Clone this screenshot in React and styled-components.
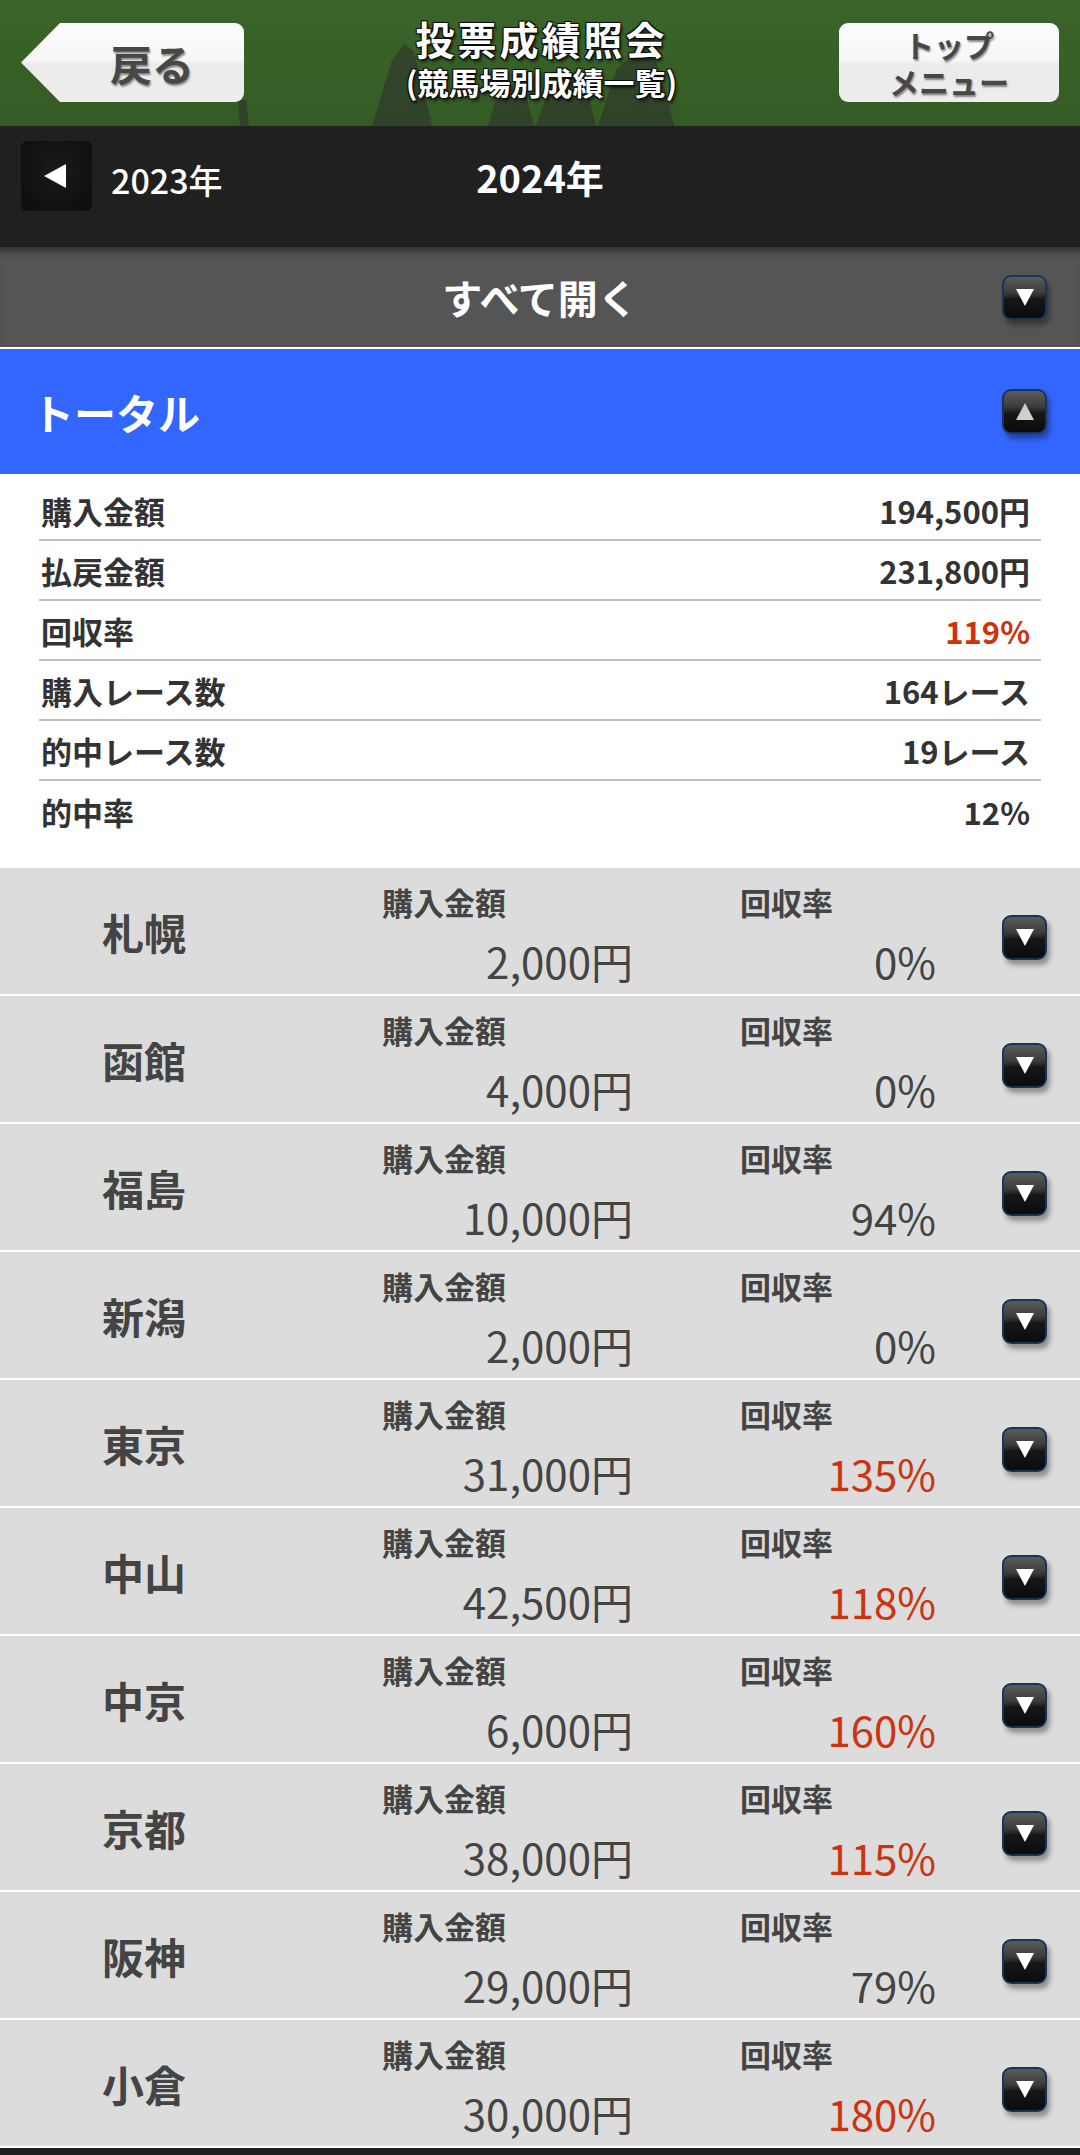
import styled, { createGlobalStyle } from 'styled-components';

const GlobalStyle = createGlobalStyle`
  html, body {
    margin: 0;
    padding: 0;
    background: #1e1e1e;
  }
  body {
    font-family: "Noto Sans CJK JP", "Noto Sans", sans-serif;
  }
`

const Page = styled.div`
  width: 1080px;
  background: #1e1e1e;
`

const Header = styled.header`
  position: relative;
  height: 126px;
  box-sizing: border-box;
  padding: 23px 21px 0;
  display: flex;
  justify-content: space-between;
  align-items: flex-start;
  background: linear-gradient(#3b652a, #345b24);
  overflow: hidden;
`

const Silhouette = styled.svg`
  position: absolute;
  left: 0;
  bottom: 0;
  width: 1080px;
  height: 126px;
`

const BackButton = styled.button`
  position: relative;
  width: 223px;
  height: 79px;
  box-sizing: border-box;
  padding: 0 0 0 39px;
  border: none;
  border-radius: 0 9px 9px 0;
  clip-path: polygon(39px 0, 100% 0, 100% 100%, 39px 100%, 0 50%);
  background: linear-gradient(#fdfdfd, #f6f6f6 48%, #ebebeb 52%, #ededed);
  font-family: inherit;
  font-size: 42px;
  font-weight: 700;
  color: #474747;
  text-shadow: 1px 2px 2px rgba(0, 0, 0, 0.45);
  display: flex;
  align-items: center;
  justify-content: center;
`

const TitleBlock = styled.div`
  position: relative;
  margin-top: -6px;
  text-align: center;
  color: #fff;
  font-weight: 700;
  text-shadow: 0 0 2px #000, 1px 1px 0 #111, -1px -1px 0 #111, 1px -1px 0 #111, -1px 1px 0 #111, 2px 3px 3px rgba(0, 0, 0, 0.6);
`

const Title = styled.div`
  font-size: 39px;
  line-height: 42px;
  letter-spacing: 3px;
`

const Subtitle = styled.div`
  margin-top: 4px;
  font-size: 31px;
  line-height: 38px;
  letter-spacing: 0;
`

const TopButton = styled.button`
  position: relative;
  width: 220px;
  height: 79px;
  border: none;
  border-radius: 9px;
  background: linear-gradient(#fdfdfd, #f6f6f6 48%, #ebebeb 52%, #ededed);
  font-family: inherit;
  font-size: 30px;
  font-weight: 700;
  line-height: 37px;
  color: #474747;
  text-shadow: 1px 2px 2px rgba(0, 0, 0, 0.45);
  display: flex;
  flex-direction: column;
  align-items: center;
  justify-content: center;
  padding: 0;
`

const YearBar = styled.nav`
  height: 121px;
  box-sizing: border-box;
  padding: 15px 21px 0;
  background: #202020;
  display: grid;
  grid-template-columns: 1fr auto 1fr;
  align-items: start;
`

const YearPrev = styled.div`
  display: flex;
  align-items: center;
  height: 70px;
`

const PrevButton = styled.button`
  width: 71px;
  height: 70px;
  border: none;
  border-radius: 6px;
  background: radial-gradient(circle at 50% 40%, #1a1a1a, #101010 70%);
  display: flex;
  align-items: center;
  justify-content: center;
  padding: 0 4px 0 0;
`

const PrevYear = styled.span`
  margin-left: 19px;
  padding-top: 6px;
  font-size: 34px;
  font-weight: 500;
  color: #fff;
`

const CurrentYear = styled.div`
  height: 70px;
  display: flex;
  align-items: center;
  font-size: 38px;
  font-weight: 700;
  color: #fff;
`

const ExpandBar = styled.div`
  height: 100px;
  padding: 0 33px;
  background: #555;
  box-shadow: inset 0 10px 8px -6px rgba(0, 0, 0, 0.45);
  display: grid;
  grid-template-columns: 1fr auto 1fr;
  align-items: center;
  color: #fff;
  font-size: 40px;
  font-weight: 700;
`

const EndCell = styled.div`
  justify-self: end;
  display: flex;
`

const TotalBar = styled.div`
  height: 127px;
  box-sizing: border-box;
  border-top: 2px solid #fff;
  padding: 0 33px 0 32px;
  background: #3366ff;
  display: flex;
  align-items: center;
  justify-content: space-between;
  color: #fff;
  font-size: 42px;
  font-weight: 700;
`

const ArrowButton = styled.div`
  width: 45px;
  height: 45px;
  box-sizing: border-box;
  border: 2px solid #17355a;
  border-radius: 9px;
  background: linear-gradient(#5c5c5c, #3c3c3c 38%, #161616 55%, #0b0b0b);
  box-shadow: 3px 5px 5px rgba(0, 0, 0, 0.35);
  display: flex;
  align-items: center;
  justify-content: center;
  margin-top: ${({ $offset }) => $offset || 0}px;
  margin-left: ${({ $gap }) => $gap || 0}px;
`

const TotalTable = styled.div`
  background: #fff;
  padding: 7px 39px 27px;
`

const TotalRow = styled.div`
  height: 60px;
  box-sizing: border-box;
  padding: 0 11px 0 2px;
  display: flex;
  align-items: center;
  justify-content: space-between;
  border-bottom: 2px solid #c0c0c0;
  font-size: 31px;
  font-weight: 700;
  color: #333;

  &:last-child {
    border-bottom: none;
  }
`

const Value = styled.span`
  color: ${({ $red }) => ($red ? '#cc3311' : 'inherit')};
`

const VenueRow = styled.div`
  height: 128px;
  box-sizing: border-box;
  border-bottom: 2px solid #fff;
  padding-left: 102px;
  background: #dcdcdc;
  display: flex;
  align-items: center;
  color: #444;
`

const VenueName = styled.div`
  width: 280px;
  font-size: 42px;
  font-weight: 700;
`

const Stat = styled.div`
  align-self: stretch;
  width: ${({ $width }) => $width}px;
  margin-left: ${({ $gap }) => $gap || 0}px;
  padding-top: 15px;
  display: flex;
  flex-direction: column;
`

const StatLabel = styled.div`
  font-size: 31px;
  line-height: 37px;
  font-weight: 700;
`

const StatValue = styled.div`
  margin-top: 16px;
  font-size: 42px;
  line-height: 50px;
  font-weight: 400;
  text-align: right;
  color: ${({ $red }) => ($red ? '#cc3311' : '#444')};
`

const Triangle = ({ dir = 'down', color = '#fff' }) => {
  const points = {
    down: '0,0 18,0 9,17',
    up: '0,17 18,17 9,0',
  }[dir];
  return (
    <svg width="18" height="17" viewBox="0 0 18 17">
      <polygon points={points} fill={color} />
    </svg>
  );
};

const totals = [
  { label: '購入金額', value: '194,500円' },
  { label: '払戻金額', value: '231,800円' },
  { label: '回収率', value: '119%', red: true },
  { label: '購入レース数', value: '164レース' },
  { label: '的中レース数', value: '19レース' },
  { label: '的中率', value: '12%' },
];

const venues = [
  { name: '札幌', amount: '2,000円', rate: '0%' },
  { name: '函館', amount: '4,000円', rate: '0%' },
  { name: '福島', amount: '10,000円', rate: '94%' },
  { name: '新潟', amount: '2,000円', rate: '0%' },
  { name: '東京', amount: '31,000円', rate: '135%', red: true },
  { name: '中山', amount: '42,500円', rate: '118%', red: true },
  { name: '中京', amount: '6,000円', rate: '160%', red: true },
  { name: '京都', amount: '38,000円', rate: '115%', red: true },
  { name: '阪神', amount: '29,000円', rate: '79%' },
  { name: '小倉', amount: '30,000円', rate: '180%', red: true },
];

export default function App() {
  return (
    <Page>
      <GlobalStyle />
      <Header>
        <Silhouette viewBox="0 0 1080 126">
          <g fill="#2e2e2e" opacity="0.55">
            <path d="M238 100 L246 100 L249 126 L240 126 Z" />
            <path d="M372 126 L392 60 L404 44 L414 52 L424 90 L432 126 Z" />
            <path d="M488 126 L498 92 L512 86 L526 96 L534 126 Z" />
            <path d="M536 126 L552 80 L568 70 L586 84 L596 126 Z" />
            <path d="M598 126 L616 70 L636 52 L656 60 L668 100 L674 126 Z" />
          </g>
        </Silhouette>
        <BackButton>戻る</BackButton>
        <TitleBlock>
          <Title>投票成績照会</Title>
          <Subtitle>(競馬場別成績一覧)</Subtitle>
        </TitleBlock>
        <TopButton>
          <span>トップ</span>
          <span>メニュー</span>
        </TopButton>
      </Header>

      <YearBar>
        <YearPrev>
          <PrevButton>
            <svg width="22" height="24" viewBox="0 0 22 24">
              <polygon points="22,0 22,24 0,12" fill="#fff" />
            </svg>
          </PrevButton>
          <PrevYear>2023年</PrevYear>
        </YearPrev>
        <CurrentYear>2024年</CurrentYear>
        <div />
      </YearBar>

      <ExpandBar>
        <div />
        <span>すべて開く</span>
        <EndCell>
          <ArrowButton>
            <Triangle dir="down" />
          </ArrowButton>
        </EndCell>
      </ExpandBar>

      <TotalBar>
        <span>トータル</span>
        <ArrowButton>
          <Triangle dir="up" color="#cfcfcf" />
        </ArrowButton>
      </TotalBar>

      <TotalTable>
        {totals.map(row => (
          <TotalRow key={row.label}>
            <span>{row.label}</span>
            <Value $red={row.red}>{row.value}</Value>
          </TotalRow>
        ))}
      </TotalTable>

      {venues.map(v => (
        <VenueRow key={v.name}>
          <VenueName>{v.name}</VenueName>
          <Stat $width={251}>
            <StatLabel>購入金額</StatLabel>
            <StatValue>{v.amount}</StatValue>
          </Stat>
          <Stat $width={196} $gap={107}>
            <StatLabel>回収率</StatLabel>
            <StatValue $red={v.red}>{v.rate}</StatValue>
          </Stat>
          <ArrowButton $offset={12} $gap={66}>
            <Triangle dir="down" />
          </ArrowButton>
        </VenueRow>
      ))}
    </Page>
  );
}
